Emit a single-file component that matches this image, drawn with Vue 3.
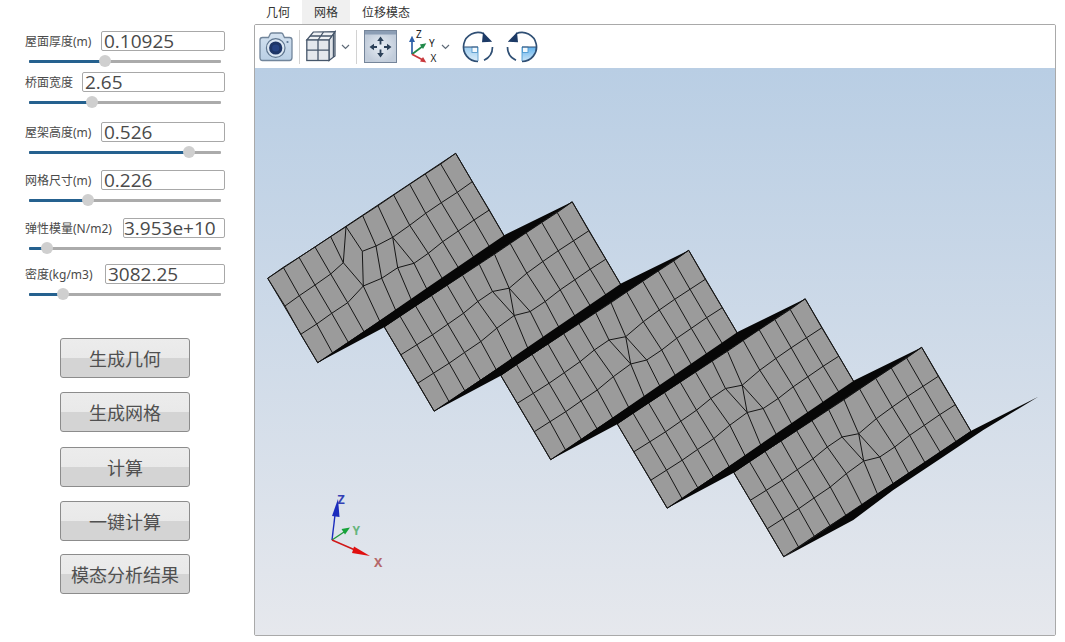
<script setup>
const params = [
  { label: '屋面厚度(m)', value: '0.10925', pos: 105, inputLeft: 101 },
  { label: '桥面宽度', value: '2.65', pos: 92, inputLeft: 82 },
  { label: '屋架高度(m)', value: '0.526', pos: 189, inputLeft: 101 },
  { label: '网格尺寸(m)', value: '0.226', pos: 88, inputLeft: 101 },
  { label: '弹性模量(N/m2)', value: '3.953e+10', pos: 47, inputLeft: 123 },
  { label: '密度(kg/m3)', value: '3082.25', pos: 63, inputLeft: 105 },
].map((p) => ({ ...p, pct: ((p.pos - 29) / 192) * 100, labelWidth: p.inputLeft - 25 }))

const actions = ['生成几何', '生成网格', '计算', '一键计算', '模态分析结果']
const tabs = ['几何', '网格', '位移模态']

const top = [[587,10],[542,42],[496,72],[449,103],[401,135],[354,167],[308,197],[258,230],[212,260],[165,291],[117,322],[70,352],[23,385]]
const bottom = [[735,262],[690,293],[643,325],[597,356],[548,388],[502,420],[455,452],[408,483],[360,515],[312,545],[265,577],[218,610],[173,638]]
const firstR1 = [[637,95],[592,127],[544,158],[497,190],[449,226],[398,262],[348,288],[307,304],[250,338],[212,372],[165,405],[118,437],[75,468]]
const firstR2 = [[688,180],[642,210],[595,243],[548,275],[505,310],[462,340],[413,353],[365,385],[310,408],[263,458],[215,490],[170,522],[122,553]]
const restR1 = [[637,97],[591,127],[545,157],[499,189],[451,224],[398,269],[348,279],[304,309],[261,344],[214,377],[168,409],[121,439],[73,469]]
const restR2 = [[688,182],[641,212],[595,244],[551,274],[506,309],[461,339],[413,351],[361,389],[313,429],[264,462],[218,494],[171,524],[124,554]]

const real = ([x, y], k) => [x / 3 + 260 + k * 116.5, y / 3 + 150 + k * 48.5]
const pts = (list) => list.map((p) => p.map((n) => n.toFixed(1)).join(',')).join(' ')

function buildPanel(k) {
  const first = k === 0
  const T = top.map((p) => real(p, k))
  const B = bottom.map((p) => real(p, k))
  const R1 = (first ? firstR1 : restR1).map((p) => real(p, k))
  const R2 = (first ? firstR2 : restR2).map((p) => real(p, k))
  const lines = []
  const chain = (a) => lines.push(pts(a))
  chain(T); chain(R2); chain(B)
  if (first) {
    chain(R1.slice(0, 8)); chain(R1.slice(8))
  } else {
    chain(R1)
  }
  for (let i = 0; i < 13; i++) {
    lines.push(pts([T[i], R1[i]]))
    lines.push(pts([R2[i], B[i]]))
    if (!first) lines.push(pts([R1[i], R2[i]]))
  }
  if (first) {
    const map = [[0,0],[1,1],[2,2],[3,3],[4,4],[5,5],[5,6],[6,7],[7,8],[8,8],[9,9],[10,10],[11,11],[12,12]]
    map.forEach(([a, b]) => lines.push(pts([R1[a], R2[b]])))
    lines.push(pts([T[7], R1[8]]))
  } else {
    lines.push(pts([R1[5], R2[6]]))
  }
  const outline = pts([T[0], T[12], B[12], B[0]])
  return { k, outline, lines }
}

const panels = [0, 1, 2, 3, 4].map(buildPanel)

const lerp = (a, b, t, dy) => [a[0] + (b[0] - a[0]) * t, a[1] + (b[1] - a[1]) * t + dy]
const ridges = [0, 1, 2, 3].map((k) => {
  const bl = real(bottom[12], k)
  const br = real(bottom[0], k)
  const nextTop = real(top[0], k + 1)
  const nextLeft = real(top[12], k + 1)
  return pts([
    bl,
    lerp(bl, br, 0.25, -0.4),
    lerp(bl, br, 0.6, -1.8),
    lerp(bl, br, 1, -2.5),
    nextTop,
    [nextLeft[0], nextLeft[1] + 0.4],
  ])
})
const lastRidge = pts([[784,557.3],[880,492],[971.7,430.5],[1038.3,396.7],[983.3,430],[943.3,456.7],[893.3,490],[853.3,520]])
</script>

<template>
  <div class="app">
    <aside class="side">
      <div v-for="p in params" :key="p.label" class="param">
        <div class="param-row">
          <span class="param-label" :style="{ width: p.labelWidth + 'px' }">{{ p.label }}</span>
          <input class="param-input" :value="p.value" readonly />
        </div>
        <div class="slider">
          <div class="slider-fill" :style="{ width: p.pct + '%' }"></div>
          <div class="slider-thumb" :style="{ left: p.pct + '%' }"></div>
        </div>
      </div>
      <div class="actions">
        <button v-for="a in actions" :key="a" class="action" type="button">{{ a }}</button>
      </div>
    </aside>

    <main class="main">
      <nav class="tabs">
        <span v-for="(t, i) in tabs" :key="t" class="tab" :class="{ active: i === 1 }">{{ t }}</span>
      </nav>
      <section class="viewer">
        <div class="toolbar">
          <svg class="ic cam" width="34" height="30" viewBox="0 0 34 30">
            <defs>
              <linearGradient id="camg" x1="0" y1="0" x2="0" y2="1">
                <stop offset="0" stop-color="#d4e2f0" />
                <stop offset="1" stop-color="#b9cfe5" />
              </linearGradient>
              <linearGradient id="rotg" x1="0" y1="0" x2="0" y2="1">
                <stop offset="0" stop-color="#9dcdf0" />
                <stop offset="1" stop-color="#dcedf9" />
              </linearGradient>
              <linearGradient id="rotg2" x1="0" y1="0" x2="0" y2="1">
                <stop offset="0" stop-color="#62b2ec" />
                <stop offset="1" stop-color="#cde6f8" />
              </linearGradient>
              <radialGradient id="fitg">
                <stop offset="0" stop-color="#e8eef5" />
                <stop offset="1" stop-color="#c2cddb" />
              </radialGradient>
            </defs>
            <path d="M9.5 5.5 L11.5 1.5 Q12 1 13 1 H22 Q23 1 23.5 1.5 L25.5 5.5 H30.5 Q33 5.5 33 8 V25.5 Q33 28.5 30.5 28.5 H3.5 Q1 28.5 1 25.5 V8 Q1 5.5 3.5 5.5 Z" fill="url(#camg)" stroke="#71859b" stroke-width="1.3" />
            <circle cx="16.7" cy="16" r="9.3" fill="#dbe7f3" stroke="#5f768f" stroke-width="1.2" />
            <circle cx="16.7" cy="16" r="6.6" fill="#1d3566" />
            <circle cx="16.7" cy="16" r="3.6" fill="#254281" />
            <circle cx="28.5" cy="10" r="1.1" fill="#5a7693" />
          </svg>
          <i class="sep"></i>
          <svg class="ic cube" width="30" height="31" viewBox="0 0 30 31">
            <path d="M23 9 L29 0.7 V25 L23 29.5 Z" fill="#dfe3e8" stroke="#46566a" stroke-width="1.2" />
            <path d="M0.8 9 L7.3 1 L29 0.7 L23 9 Z" fill="#eef1f4" stroke="#46566a" stroke-width="1.2" />
            <rect x="0.8" y="9" width="22.2" height="20.5" fill="#e4e8ed" stroke="#46566a" stroke-width="1.3" />
            <path d="M12 9 V29.5 M0.8 19.2 H23 M12 9 L17.5 1 M4 5 H26" fill="none" stroke="#46566a" stroke-width="1.3" />
            <path d="M27.5 3 V26" stroke="#46566a" stroke-width="1.4" fill="none" />
          </svg>
          <svg class="ic chev" width="9" height="6" viewBox="0 0 9 6"><path d="M1 1 L4.5 4.5 L8 1" fill="none" stroke="#5f6b78" stroke-width="1.2" /></svg>
          <i class="sep sep2"></i>
          <svg class="ic fit" width="34" height="33" viewBox="0 0 34 33">
            <rect x="1.5" y="0.5" width="32" height="32" fill="url(#fitg)" stroke="#75859a" />
            <rect x="2" y="1" width="31" height="3.5" fill="#8c9eb5" />
            <path d="M17.5 10 V14.5 M17.5 19.5 V24 M9.5 17 H14 M21 17 H25.5" fill="none" stroke="#2c4159" stroke-width="1.8" />
            <path d="M17.5 6.5 L14.2 11 H20.8 Z M17.5 27.5 L14.2 23 H20.8 Z M6.5 17 L11 13.7 V20.3 Z M28.5 17 L24 13.7 V20.3 Z" fill="#2c4159" />
          </svg>
          <svg class="ic axes" width="32" height="34" viewBox="0 0 32 34">
            <path d="M4 24.2 V10" stroke="#2d5fa8" stroke-width="1.7" fill="none" />
            <path d="M4 5.8 L1 12 H7 Z" fill="#2d5fa8" />
            <path d="M4 24.2 L15 16" stroke="#22894a" stroke-width="1.7" fill="none" />
            <path d="M18.3 13.2 L11.8 14.5 L15 19 Z" fill="#22894a" />
            <path d="M4 24.2 L15 30" stroke="#c9383c" stroke-width="1.7" fill="none" />
            <path d="M18.3 32.5 L15 27 L12 31.5 Z" fill="#c9383c" />
            <text x="8" y="7.6" class="ax">Z</text>
            <text x="21" y="17.4" class="ax">Y</text>
            <text x="22.5" y="31.5" class="ax">X</text>
          </svg>
          <svg class="ic chev chev2" width="9" height="6" viewBox="0 0 9 6"><path d="M1 1 L4.5 4.5 L8 1" fill="none" stroke="#5f6b78" stroke-width="1.2" /></svg>
          <svg class="ic rot1" width="32" height="32" viewBox="0 0 32 32">
            <path d="M16 16 H1.5 A14.5 14.5 0 0 0 16 30.5 Z" fill="url(#rotg)" />
            <rect x="10" y="16" width="5.5" height="5.5" fill="#f4f9fd" stroke="#5a9bcc" stroke-width="0.9" />
            <path d="M16 16 V30" stroke="#5a9bcc" stroke-width="0.9" fill="none" />
            <path d="M1.5 16 H16" stroke="#2f4f74" stroke-width="1.2" fill="none" />
            <path d="M16 30.5 A14.5 14.5 0 1 1 22 2.8 M30.5 16 A14.5 14.5 0 0 1 22 29.2" fill="none" stroke="#2f4f74" stroke-width="1.7" />
            <path d="M21 1.2 L30.2 10.8 L20 11.2 Z" fill="#1c3a66" />
          </svg>
          <svg class="ic rot2" width="32" height="32" viewBox="0 0 32 32">
            <path d="M16 16 H30.5 A14.5 14.5 0 0 1 16 30.5 Z" fill="url(#rotg2)" />
            <rect x="16.5" y="16" width="5.5" height="5.5" fill="#f4f9fd" stroke="#4d9ad0" stroke-width="0.9" />
            <path d="M16 16 V30" stroke="#4d9ad0" stroke-width="0.9" fill="none" />
            <path d="M16 16 H30.5" stroke="#2f4f74" stroke-width="1.2" fill="none" />
            <path d="M16 30.5 A14.5 14.5 0 1 0 10 2.8 M1.5 16 A14.5 14.5 0 0 0 10 29.2" fill="none" stroke="#2f4f74" stroke-width="1.7" />
            <path d="M11 1.2 L1.8 10.8 L12 11.2 Z" fill="#1c3a66" />
          </svg>
        </div>
        <div class="canvas">
          <svg class="scene" viewBox="255 68 800 567" preserveAspectRatio="none">
            <g v-for="p in panels" :key="p.k">
              <polygon :points="p.outline" fill="#9b9b9b" stroke="#161616" stroke-width="1" />
              <polyline v-for="(l, i) in p.lines" :key="i" :points="l" fill="none" stroke="#161616" stroke-width="1" />
            </g>
            <polygon v-for="(r, i) in ridges" :key="i" :points="r" fill="#070707" />
            <polygon :points="lastRidge" fill="#070707" />

            <path d="M332 540 L335 515" stroke="#1a2bbd" stroke-width="1.4" />
            <path d="M338 499 L332 516 L339.5 517 Z" fill="#1a2bbd" />
            <path d="M332 540 L344 532" stroke="#1f9a3a" stroke-width="1.4" />
            <path d="M350 527.5 L341.5 529 L345 534.5 Z" fill="#16a33a" />
            <path d="M332 540 L355 550" stroke="#d01818" stroke-width="1.4" />
            <path d="M370 556 L354 546.5 L352 553 Z" fill="#e01010" />
            <text x="337.5" y="504" class="tri tz">Z</text>
            <text x="352.5" y="535" class="tri ty">Y</text>
            <text x="374" y="566.5" class="tri tx">X</text>
          </svg>
        </div>
      </section>
    </main>
  </div>
</template>

<style>
html, body { margin: 0; background: #fff; overflow: hidden; }
</style>

<style scoped>
.app {
  display: flex;
  width: 1065px;
  height: 642px;
  background: #fff;
  font-family: "Noto Sans", "Noto Sans CJK SC", sans-serif;
  color: #444;
}
.side {
  width: 254px;
  flex: none;
  padding: 31px 29px 0 25px;
  box-sizing: border-box;
}
.param { height: 40px; }
.param:nth-child(2) { margin-top: 1px; }
.param:nth-child(3) { margin-top: 10px; }
.param:nth-child(4) { margin-top: 8px; }
.param:nth-child(5) { margin-top: 8px; }
.param:nth-child(6) { margin-top: 6px; }
.param-row {
  display: flex;
  align-items: center;
  height: 20px;
}
.param-label {
  flex: none;
  font-size: 12px;
  white-space: nowrap;
  color: #4a4a4a;
}
.param-input {
  flex: 1;
  min-width: 0;
  height: 20px;
  box-sizing: border-box;
  border: 1px solid #a8a8a8;
  border-radius: 2px;
  padding: 0 2px;
  font: 400 19px/18px "Open Sans", "Noto Sans", sans-serif;
  color: #4a4a4a;
  background: #fff;
  outline: none;
}
.param:nth-child(5) .param-input { padding-left: 0; }
.slider {
  position: relative;
  height: 2.5px;
  margin: 9px 4px 0 4px;
  background: #ababab;
  border-radius: 1px;
}
.slider-fill {
  height: 100%;
  background: #25618f;
  border-radius: 1px;
}
.slider-thumb {
  position: absolute;
  top: -4.75px;
  width: 12px;
  height: 12px;
  margin-left: -6px;
  border-radius: 50%;
  background: #cfcfcf;
}
.actions {
  display: flex;
  flex-direction: column;
  gap: 14px;
  margin: 34px 0 0 35px;
}
.action {
  width: 130px;
  height: 40px;
  box-sizing: border-box;
  border: 1px solid #8c8c8c;
  border-radius: 3px;
  padding: 0;
  background: linear-gradient(#ececec 0, #e9e9e9 50%, #d4d4d4 50%, #d4d4d4 100%);
  font: 18px "Noto Sans CJK SC", sans-serif;
  color: #505050;
}
.action:nth-child(3) { margin-top: 1px; }
.action:nth-child(5) { margin-top: -1px; }
.main {
  width: 802px;
  flex: none;
  display: flex;
  flex-direction: column;
}
.tabs {
  display: flex;
  height: 24px;
}
.tab {
  padding: 0 12px;
  font: 12px/24px "Noto Sans CJK SC", sans-serif;
  color: #333;
}
.tab.active { background: #f0f0f0; }
.viewer {
  height: 612px;
  box-sizing: border-box;
  border: 1px solid #a9a9a9;
  border-radius: 2px;
  display: flex;
  flex-direction: column;
  overflow: hidden;
}
.toolbar {
  height: 43px;
  flex: none;
  display: flex;
  align-items: center;
  background: #fff;
  padding-left: 4px;
}
.ic { display: block; flex: none; overflow: visible; }
.sep {
  width: 1px;
  height: 34px;
  background: #d2d2d2;
  margin: 0 6px;
}
.chev { margin-left: 5px; }
.sep2 { margin-left: 6px; }
.axes { margin-left: 11px; }
.chev2 { margin-left: 1px; }
.rot1 { margin-left: 12px; }
.rot2 { margin-left: 12px; }
.ax { font: 10px "Noto Sans", sans-serif; fill: #222; }
.canvas {
  flex: 1;
  min-height: 0;
  background: linear-gradient(#b9cee4, #e6e8ed);
}
.scene { display: block; width: 100%; height: 100%; }
.tri { font: 700 12.5px "Noto Sans", sans-serif; }
.tz { fill: #3340b5; }
.ty { fill: #66b57c; font-size: 12px; }
.tx { fill: #b5686a; }
</style>
